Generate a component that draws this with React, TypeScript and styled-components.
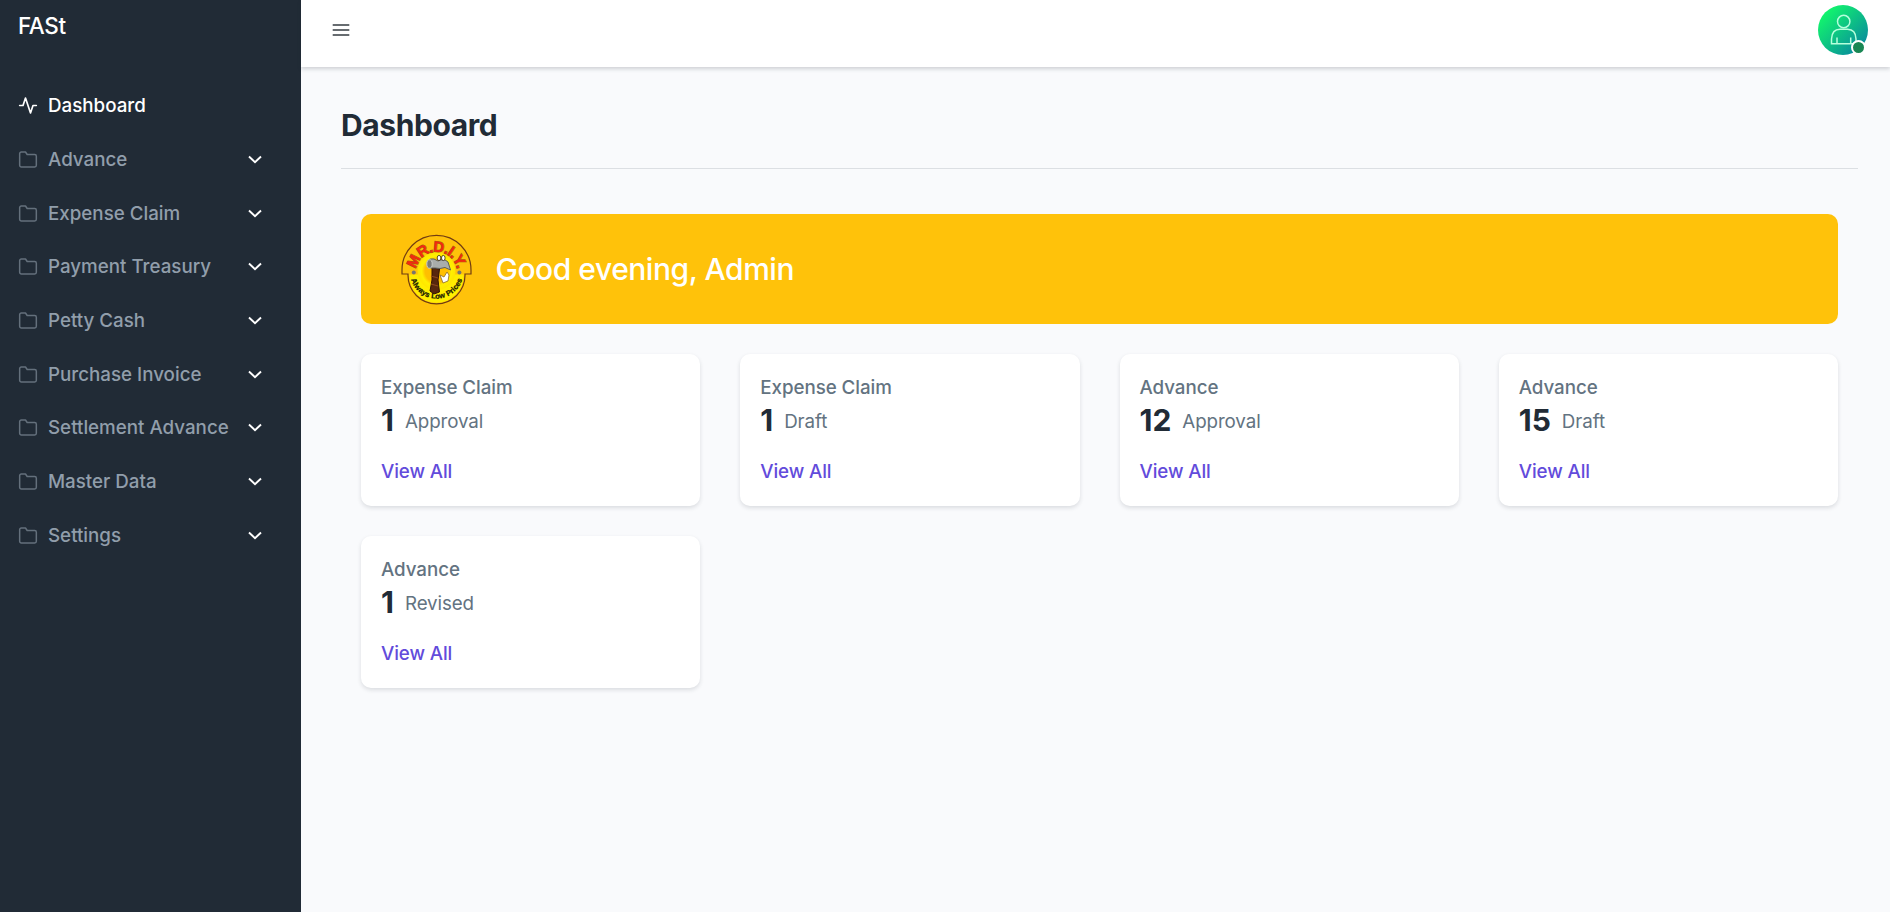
import React from "react";
import styled, { createGlobalStyle } from "styled-components";

const GlobalStyle = createGlobalStyle`
  *, *::before, *::after { box-sizing: border-box; }
  body {
    margin: 0;
    background: #f9fafc;
    font-family: Inter, "Liberation Sans", sans-serif;
    font-size: 18.75px;
    line-height: 1.5;
    color: #212b36;
  }
`;

const Shell = styled.div`
  display: flex;
  height: 912px;
  overflow: hidden;
`;

const Sidebar = styled.aside`
  width: 301px;
  flex: none;
  background: #212b36;
`;

const Brand = styled.div`
  height: 78.5px;
  padding: 9px 18px 0;
  color: #fff;
  font-size: 22.5px;
  line-height: 34px;
  font-weight: 500;
  letter-spacing: -0.4px;
`;

const Menu = styled.nav`
  display: flex;
  flex-direction: column;
`;

const MenuItem = styled.a<{ $active?: boolean }>`
  display: flex;
  align-items: center;
  height: 53.7px;
  padding: 0 35px 0 18px;
  font-weight: 500;
  white-space: nowrap;
  color: ${(p) => (p.$active ? "#fff" : "#919eab")};

  svg { flex: none; }
`;

const MenuLabel = styled.span`
  flex: 1;
  margin-left: 10px;
  padding-top: 2px;
`;

const ItemIcon = styled.svg<{ $dim?: boolean }>`
  width: 20px;
  height: 20px;
  fill: none;
  stroke: currentColor;
  stroke-width: ${(p) => (p.$dim ? 1.8 : 2)};
  stroke-linecap: round;
  stroke-linejoin: round;
  opacity: ${(p) => (p.$dim ? 0.6 : 1)};
  transform: translateY(0.5px);
`;

const Chevron = styled.svg`
  width: 22px;
  height: 22px;
  fill: none;
  stroke: #fff;
  stroke-width: 1.9;
`;

const Main = styled.div`
  flex: 1;
  min-width: 0;
`;

const Header = styled.header`
  display: flex;
  align-items: flex-start;
  justify-content: space-between;
  height: 67px;
  padding: 5px 22px 0 30px;
  background: #fff;
  box-shadow: 0 2px 4px rgba(33, 43, 54, 0.2);
`;

const ToggleIcon = styled.svg`
  width: 20px;
  height: 20px;
  margin-top: 15px;
  fill: none;
  stroke: #676c70;
  stroke-width: 1.8;
`;

const Avatar = styled.div`
  position: relative;
  width: 50px;
  height: 50px;
  border-radius: 50%;
  background: linear-gradient(135deg, #12f46d 15%, #0885a0 92%);

  svg { display: block; }
`;

const Status = styled.span`
  position: absolute;
  right: 2px;
  bottom: 0;
  width: 15px;
  height: 15px;
  border: 2px solid #fff;
  border-radius: 50%;
  background: #198754;
`;

const Content = styled.main`
  padding: 36px 32px 0 40px;
`;

const PageTitle = styled.h1`
  height: 66px;
  margin: 0 0 45px;
  border-bottom: 1px solid #dcdfe3;
  font-size: 30px;
  line-height: 45px;
  font-weight: 700;
  letter-spacing: -0.4px;
`;

const Sections = styled.div`
  padding: 0 20px;
`;

const Banner = styled.section`
  display: flex;
  align-items: center;
  height: 110px;
  margin-bottom: 30px;
  padding-left: 39.5px;
  border-radius: 10px;
  background: #ffc20a;
`;

const Greeting = styled.h2`
  margin: 0 0 0 24px;
  color: #fff;
  font-size: 30px;
  font-weight: 500;
  letter-spacing: -0.47px;
`;

const Cards = styled.div`
  display: grid;
  grid-template-columns: repeat(4, 1fr);
  column-gap: 40px;
  row-gap: 30px;
`;

const Card = styled.article`
  height: 152px;
  padding: 20px;
  border-radius: 10px;
  background: #fff;
  box-shadow: 0 2px 4px rgba(33, 43, 54, 0.14);
`;

const CardTitle = styled.div`
  color: #637381;
  font-weight: 500;
  line-height: 28px;
  letter-spacing: -0.05px;
`;

const CardFigure = styled.div`
  display: flex;
  align-items: flex-start;
  height: 36px;
  margin-bottom: 20px;
  line-height: 36px;
`;

const Count = styled.span`
  font-size: 30px;
  font-weight: 700;
`;

const State = styled.span`
  margin-left: 11px;
  padding-top: 2px;
  color: #637381;
  letter-spacing: -0.1px;
`;

const ViewAll = styled.a`
  display: block;
  color: #624bdb;
  font-weight: 500;
  line-height: 28px;
  letter-spacing: -0.1px;
`;

const MENU = [
  "Advance",
  "Expense Claim",
  "Payment Treasury",
  "Petty Cash",
  "Purchase Invoice",
  "Settlement Advance",
  "Master Data",
  "Settings",
];

const CARDS = [
  { title: "Expense Claim", count: 1, state: "Approval" },
  { title: "Expense Claim", count: 1, state: "Draft" },
  { title: "Advance", count: 12, state: "Approval" },
  { title: "Advance", count: 15, state: "Draft" },
  { title: "Advance", count: 1, state: "Revised" },
];

const StoreLogo = () => (
  <svg width="71" height="71" viewBox="0 0 71 71">
    <defs>
      <radialGradient id="disc">
        <stop offset="0.6" stopColor="#ffbf00" />
        <stop offset="0.78" stopColor="#fff000" />
        <stop offset="1" stopColor="#ffe500" />
      </radialGradient>
      <path id="nameArc" d="M15 38.5A20.6 20.6 0 0 1 56.2 38.5" />
      <path id="sloganArc" d="M9 38A26.6 26.6 0 0 0 62.2 38" />
    </defs>
    <path
      d="M1 40V36A34.5 34.7 0 0 1 70 36V40H64V41.3A28.5 28.5 0 0 1 7 41.3V40Z"
      fill="#ffc20a"
      stroke="#713c12"
      strokeWidth="1.2"
    />
    <path d="M8.2 40.6H62.8A27.3 28.2 0 0 1 8.2 40.6Z" fill="#ffee00" />
    <circle cx="35.5" cy="37" r="19" fill="url(#disc)" />
    <circle cx="12.8" cy="38.5" r="2" fill="#77766f" />
    <circle cx="58.4" cy="38.5" r="2" fill="#77766f" />
    <g fontFamily="Liberation Sans, sans-serif" fontWeight="700">
      <text fontSize="15" fill="#f3290f" stroke="#a0630c" strokeWidth="1" paintOrder="stroke">
        <textPath href="#nameArc" startOffset="50%" textAnchor="middle" textLength="58">MR.D.I.Y.</textPath>
      </text>
      <text fontSize="7.4" fill="#171804" stroke="#171804" strokeWidth="0.25">
        <textPath href="#sloganArc" startOffset="50%" textAnchor="middle" textLength="68">Always Low Prices</textPath>
      </text>
    </g>
    <path d="M31 34L38.5 35 37 46 38.5 58 33 60 29 57 31 46Z" fill="#57270d" stroke="#321504" />
    <path d="M30 42L37 44M30 50L37 52" stroke="#8c481e" strokeWidth="1.3" />
    <path d="M27 27Q29 24 33 25L37 27Q43 24 47 28L49.5 36 44 33.5 39 34.5 34 34 29 34Q26 31 27 27Z" fill="#a9adab" stroke="#5c5e5c" />
    <ellipse cx="28.5" cy="30" rx="2.7" ry="4.2" fill="#777b7b" stroke="#c9cccb" />
    <ellipse cx="38" cy="24" rx="1.8" ry="2.6" fill="#fff" stroke="#342713" strokeWidth="0.8" />
    <ellipse cx="42.3" cy="24" rx="1.8" ry="2.6" fill="#fff" stroke="#342713" strokeWidth="0.8" />
    <path d="M39 41L43 43 46 38 48 41 47 47 42 49Z" fill="#fff" stroke="#8b6a24" strokeWidth="0.8" />
  </svg>
);

const AvatarFigure = () => (
  <svg width="50" height="50" viewBox="0 0 50 50" fill="none" stroke="#b6ffdc" strokeWidth="1.5">
    <circle cx="25.7" cy="16.5" r="6.2" />
    <path d="M13.5 38.8V34Q14 24.3 22 24.3H29.5Q37.8 24.5 38 34V38.8ZM19 38.5V32.5M32.7 38.5V32.5" />
  </svg>
);

export default function App() {
  return (
    <>
      <GlobalStyle />
      <Shell>
        <Sidebar>
          <Brand>FASt</Brand>
          <Menu>
            <MenuItem $active>
              <ItemIcon viewBox="0 0 24 24">
                <path d="M22 12h-4l-3 9L9 3l-3 9H2" />
              </ItemIcon>
              <MenuLabel>Dashboard</MenuLabel>
            </MenuItem>
            {MENU.map((label) => (
              <MenuItem key={label}>
                <ItemIcon $dim viewBox="0 0 24 24">
                  <path d="M22 19a2 2 0 0 1-2 2H4a2 2 0 0 1-2-2V5a2 2 0 0 1 2-2h5l2 3h9a2 2 0 0 1 2 2z" />
                </ItemIcon>
                <MenuLabel>{label}</MenuLabel>
                <Chevron viewBox="0 0 22 22">
                  <path d="M5 8.5L11 14.2L17 8.5" />
                </Chevron>
              </MenuItem>
            ))}
          </Menu>
        </Sidebar>
        <Main>
          <Header>
            <ToggleIcon viewBox="0 0 20 20">
              <path d="M1.7 5H18.3M1.7 10H18.3M1.7 15H18.3" />
            </ToggleIcon>
            <Avatar>
              <AvatarFigure />
              <Status />
            </Avatar>
          </Header>
          <Content>
            <PageTitle>Dashboard</PageTitle>
            <Sections>
              <Banner>
                <StoreLogo />
                <Greeting>Good evening, Admin</Greeting>
              </Banner>
              <Cards>
                {CARDS.map((card) => (
                  <Card key={card.title + card.state}>
                    <CardTitle>{card.title}</CardTitle>
                    <CardFigure>
                      <Count>{card.count}</Count>
                      <State>{card.state}</State>
                    </CardFigure>
                    <ViewAll>View All</ViewAll>
                  </Card>
                ))}
              </Cards>
            </Sections>
          </Content>
        </Main>
      </Shell>
    </>
  );
}
